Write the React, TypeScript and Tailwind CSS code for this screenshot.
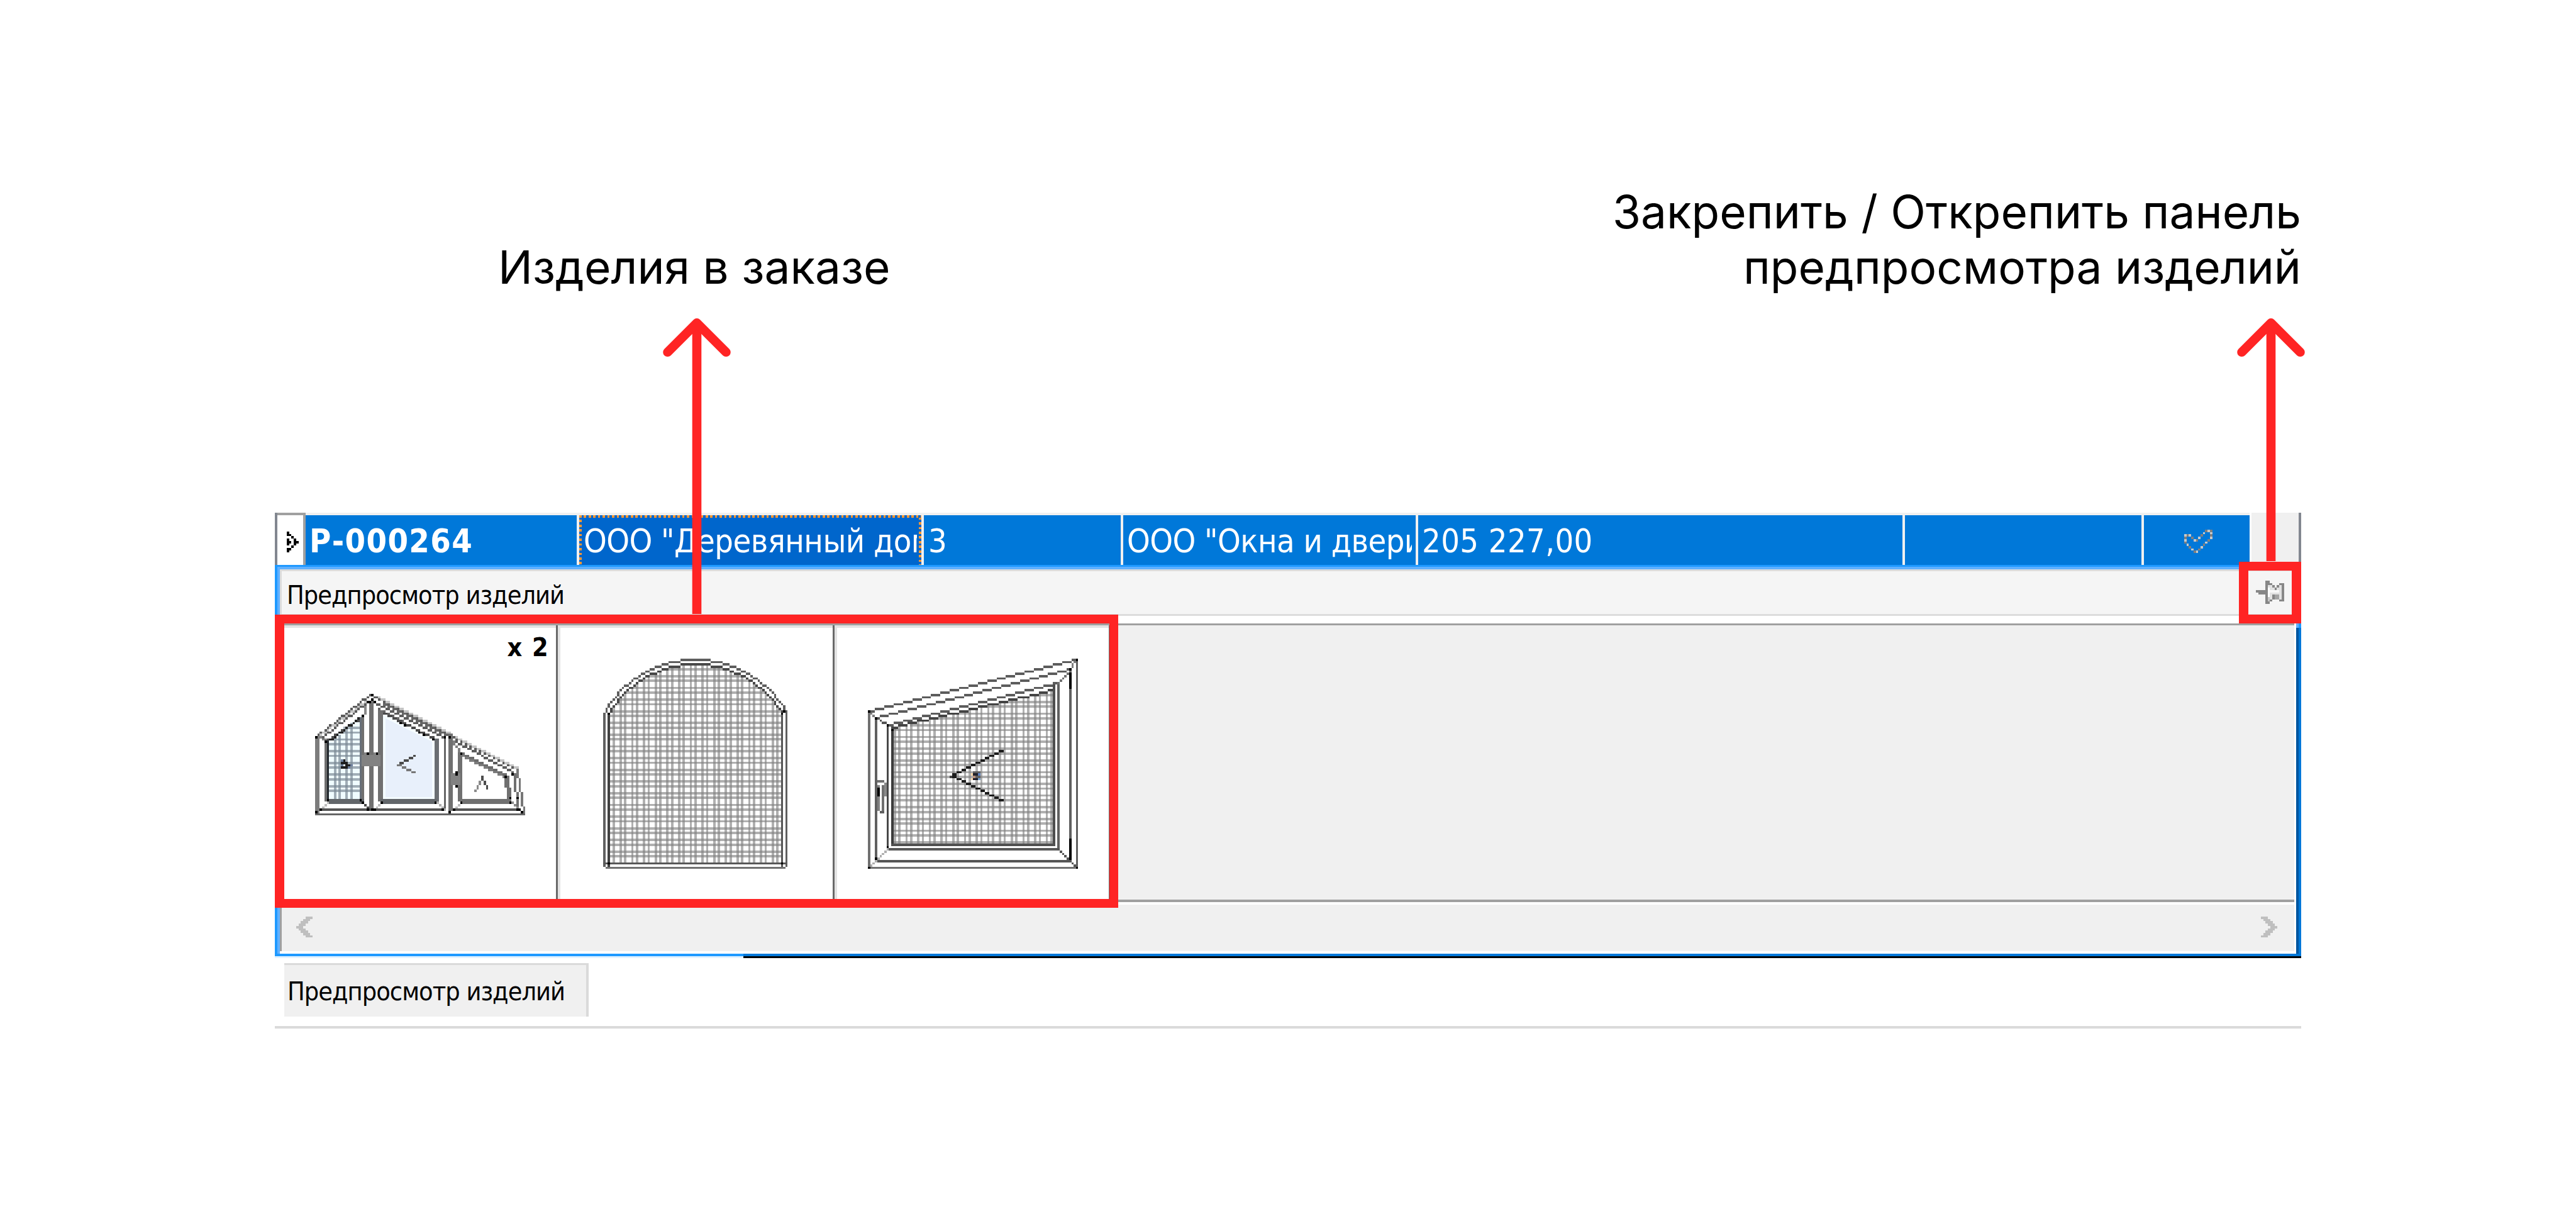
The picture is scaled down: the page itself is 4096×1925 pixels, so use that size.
import React from "react";

type Pt = [number, number];

/** Path data made of unit squares along a stepped line. */
function stepLine(points: Pt[]): string {
  let d = "";
  for (let i = 0; i < points.length - 1; i++) {
    let [x, y] = points[i];
    const [x1, y1] = points[i + 1];
    const dx = Math.abs(x1 - x);
    const dy = -Math.abs(y1 - y);
    const sx = x < x1 ? 1 : -1;
    const sy = y < y1 ? 1 : -1;
    let err = dx + dy;
    for (;;) {
      d += `M${x} ${y}h1v1h-1z`;
      if (x === x1 && y === y1) break;
      const e2 = 2 * err;
      if (e2 >= dy) {
        err += dy;
        x += sx;
      }
      if (e2 <= dx) {
        err += dx;
        y += sy;
      }
    }
  }
  return d;
}

function dots(points: Pt[]): string {
  return points.map(([x, y]) => `M${x} ${y}h1v1h-1z`).join("");
}

function arc(cx: number, cy: number, r: number, x0: number, x1: number): string {
  const pts: Pt[] = [];
  for (let x = x0; x <= x1; x++) {
    pts.push([x, Math.round(cy - Math.sqrt(r * r - (x - cx) * (x - cx)))]);
  }
  return stepLine(pts);
}

function range(from: number, to: number, mods: number[]): number[] {
  const out: number[] = [];
  for (let i = from; i <= to; i++) if (mods.includes(i % 5)) out.push(i);
  return out;
}

const Line = ({ p, c = "#5c5c5c" }: { p: Pt[]; c?: string }) => <path d={stepLine(p)} fill={c} />;
const Box = ({ x, y, w, h, c = "#707070" }: { x: number; y: number; w: number; h: number; c?: string }) => (
  <rect x={x} y={y} width={w} height={h} fill={c} />
);

function TripleWindow() {
  return (
    <svg viewBox="0 0 90 52" className="h-[193.4px] w-[334.8px]" shapeRendering="crispEdges">
      <polygon points="5,20 20,9 20,46 5,46" fill="#f0fcff" />
      <g fill="#7b8794" fillOpacity="0.68">
        {[8, 10, 13, 15].map((x) => (
          <rect key={x} x={x} y={27.5 - x} width="1" height={18 + x} />
        ))}
        {[14, 16, 19, 21, 24, 26, 29, 31, 34, 36, 39, 41].map((y) => {
          const x = Math.max(6, 26 - y);
          return <rect key={y} x={x} y={y} width={19 - x} height="1" />;
        })}
      </g>
      <polygon points="29,8 51,20 51,45 29,45" fill="#f4fcff" />
      <polygon points="30,10.5 50,20.5 50,44 30,44" fill="#e8f0fb" />

      <Line p={[[0, 18], [23, 0]]} />
      <Line p={[[3, 18], [22, 3]]} />
      <path d={stepLine([[2, 17], [21, 3]])} fill="#c4c4c4" />
      <Line p={[[4, 20], [19, 10]]} c="#4d4d4d" />
      <Line p={[[5, 20], [20, 9]]} c="#222222" />
      <Line p={[[24, 0], [57, 17]]} />
      <path d={stepLine([[27, 1], [58, 17]])} fill="#c4c4c4" />
      <Line p={[[25, 3], [54, 18]]} />
      <Line p={[[29, 4], [56, 17]]} c="#666666" />
      <Line p={[[27, 6], [51, 19]]} c="#666666" />
      <Line p={[[29, 8], [50, 18]]} c="#4a4a4a" />
      <Line p={[[57, 17], [86, 32]]} />
      <path d={stepLine([[60, 18], [86, 31]])} fill="#c4c4c4" />
      <Line p={[[60, 20], [84, 33]]} />
      <Line p={[[61, 24], [81, 34]]} c="#6b6b6b" />
      <Line p={[[62, 26], [81, 35]]} c="#7c7c7c" />
      <Line p={[[58, 19], [62, 25]]} c="#808080" />

      <Box x={0} y={18} w={2} h={33} c="#7c7c7c" />
      <Box x={4} y={20} w={1} h={26} c="#6e6e6e" />
      <Box x={5} y={20} w={1} h={26} c="#23282d" />
      <Box x={19} y={10} w={1} h={36} c="#68707a" />
      <Box x={20} y={9} w={1} h={37} />
      <Box x={23} y={3} w={2} h={46} />
      <Box x={27} y={7} w={2} h={39} />
      <Box x={51} y={19} w={2} h={27} c="#6a6e72" />
      <Box x={55} y={18} w={1} h={31} c="#666666" />
      <Box x={57} y={17} w={2} h={33} />
      <Box x={61} y={25} w={2} h={21} />
      <Box x={5} y={45} w={16} h={2} c="#62666a" />
      <Box x={28} y={45} w={24} h={2} c="#62666a" />
      <Box x={62} y={45} w={22} h={2} />
      <Box x={2} y={49} w={53} h={1} c="#555555" />
      <Box x={59} y={49} w={28} h={1} c="#555555" />
      <Box x={0} y={51} w={90} h={1} c="#666666" />

      <Line p={[[86, 32], [86, 35], [87, 36], [87, 41], [88, 42], [88, 47], [89, 48], [89, 50]]} c="#777777" />
      <Line p={[[85, 34], [85, 41], [86, 42], [86, 48]]} c="#707070" />
      <Box x={81} y={35} w={2} h={5} />
      <Box x={82} y={40} w={2} h={5} />
      <Line p={[[21, 5], [21, 8]]} c="#8a8a8a" />
      <Line p={[[1, 18], [4, 19]]} c="#808080" />
      <Line p={[[2, 49], [5, 46]]} c="#bdbdbd" />
      <Line p={[[20, 46], [23, 49]]} c="#4a4a4a" />
      <Line p={[[25, 49], [28, 46]]} c="#bdbdbd" />
      <Line p={[[52, 46], [55, 49]]} c="#b0b0b0" />
      <Line p={[[59, 49], [62, 46]]} c="#bdbdbd" />
      <Line p={[[84, 46], [87, 49]]} c="#8a8a8a" />

      <Box x={20} y={26} w={8} h={5} c="#828282" />
      <Box x={21} y={25} w={2} h={1} c="#828282" />
      <Box x={25} y={25} w={2} h={1} c="#828282" />
      <Box x={58} y={34} w={4} h={5} c="#828282" />
      <path
        fill="#000"
        d={dots([
          [0, 18], [24, 0], [24, 2], [22, 3], [23, 3], [25, 3], [22, 25], [26, 25], [60, 33], [60, 34], [60, 39],
          [4, 20], [20, 9], [20, 46], [5, 45], [19, 45], [28, 46], [51, 46], [2, 49], [24, 49], [22, 49], [25, 49],
          [54, 49], [55, 18], [57, 18], [59, 49], [57, 50], [0, 50], [62, 46], [62, 25], [83, 46], [83, 44],
          [86, 44], [86, 49], [87, 49], [88, 50], [84, 34], [81, 35], [36, 12], [38, 13], [44, 16], [46, 17], [50, 19],
        ])}
      />
      <Line p={[[42, 26], [36, 29]]} c="#4a4a4a" />
      <Line p={[[35, 30], [36, 30]]} c="#777777" />
      <Line p={[[37, 31], [42, 33]]} c="#777777" />
      <Line p={[[68, 41], [71, 35]]} c="#8a8a8a" />
      <Line p={[[71, 35], [73, 40]]} c="#4d4d4d" />
      <path fill="#1e1e1e" d={dots([[12, 28], [11, 29], [12, 29], [13, 29], [13, 30], [14, 30], [12, 31], [13, 31], [11, 31]])} />
      <path fill="#6d7f9c" d={dots([[11, 28], [14, 31], [15, 30], [11, 30]])} />
    </svg>
  );
}

function ArchedWindow() {
  const top = (v: number) => 45 - Math.sqrt(Math.max(0, 43 * 43 - (v - 39) * (v - 39))) + 0.5;
  return (
    <svg viewBox="0 0 79 90" className="h-[334.8px] w-[293.9px]" shapeRendering="crispEdges">
      <g fill="#808080" fillOpacity="0.62">
        {range(3, 75, [2, 4]).map((x) => {
          const y = Math.round(top(x));
          return <rect key={x} x={x} y={y} width="1" height={87 - y} />;
        })}
        {range(3, 86, [2, 4]).map((y) => {
          const half = y < 23 ? Math.sqrt(43 * 43 - (45 - y) * (45 - y)) : 37;
          const x = Math.max(3, Math.round(39 - half));
          return <rect key={y} x={x} y={y} width={79 - 2 * x} height="1" />;
        })}
      </g>
      <path d={arc(39, 45, 45, 0, 78)} fill="#5e5e5e" />
      <path d={arc(39, 45, 43, 2, 76)} fill="#484848" />
      <Box x={0} y={23} w={1} h={66} c="#606060" />
      <Box x={2} y={23} w={1} h={66} c="#404040" />
      <Box x={76} y={23} w={1} h={66} c="#555555" />
      <Box x={78} y={23} w={1} h={66} c="#606060" />
      <Box x={0} y={87} w={79} h={1} c="#585858" />
      <Box x={1} y={89} w={77} h={1} c="#707070" />
      <path fill="#000" d={dots([[2, 23], [76, 23], [77, 22], [2, 87], [76, 87]])} />
    </svg>
  );
}

function SlantedWindow() {
  const topAt = (x: number) => Math.round(30 - ((x - 10) * 17) / 69);
  return (
    <svg viewBox="0 0 90 90" className="h-[334.8px] w-[334.8px]" shapeRendering="crispEdges">
      <g fill="#808080" fillOpacity="0.62">
        {range(11, 78, [1, 3]).map((x) => (
          <rect key={x} x={x} y={topAt(x)} width="1" height={79 - topAt(x)} />
        ))}
        {range(13, 78, [0, 3]).map((y) => {
          const x = y < 30 ? Math.round(10 + ((30 - y) * 69) / 17) : 11;
          return <rect key={y} x={x} y={y} width={Math.max(0, 79 - x)} height="1" />;
        })}
      </g>
      <Line p={[[0, 22], [89, 0]]} />
      <Line p={[[3, 25], [86, 4]]} />
      <Line p={[[8, 28], [81, 10]]} />
      <Line p={[[10, 29], [79, 13]]} c="#444444" />
      <Box x={0} y={22} w={1} h={68} c="#707070" />
      <Box x={89} y={0} w={1} h={90} c="#606060" />
      <Box x={0} y={89} w={90} h={1} c="#707070" />
      <Box x={3} y={25} w={1} h={62} c="#606060" />
      <Box x={86} y={4} w={1} h={83} c="#606060" />
      <Box x={86} y={4} w={1} h={9} c="#000" />
      <Box x={86} y={77} w={1} h={9} c="#000" />
      <Box x={3} y={86} w={84} h={1} c="#555555" />
      <Box x={8} y={28} w={1} h={53} c="#484848" />
      <Box x={81} y={10} w={1} h={71} c="#606060" />
      <Box x={8} y={81} w={74} h={1} c="#585858" />
      <Box x={10} y={30} w={1} h={50} c="#3c3c3c" />
      <Box x={79} y={11} w={1} h={69} c="#4e4e4e" />
      <Box x={10} y={79} w={70} h={1} c="#505050" />
      <Line p={[[0, 22], [3, 25]]} c="#808080" />
      <Line p={[[4, 25], [8, 28]]} c="#555555" />
      <Line p={[[88, 1], [86, 4]]} c="#808080" />
      <Line p={[[86, 5], [81, 10]]} c="#707070" />
      <Line p={[[0, 89], [3, 86]]} c="#b0b0b0" />
      <Line p={[[4, 85], [8, 81]]} c="#b0b0b0" />
      <Line p={[[88, 88], [86, 86]]} c="#555555" />
      <Line p={[[85, 85], [81, 81]]} c="#555555" />
      <path
        fill="#000"
        d={dots([[0, 22], [3, 25], [8, 28], [10, 30], [89, 0], [86, 4], [0, 89], [89, 89], [3, 85], [8, 80]])}
      />
      <Box x={4} y={52} w={3} h={1} c="#707070" />
      <Box x={6} y={54} w={1} h={12} c="#707070" />
      <Box x={7} y={53} w={1} h={6} c="#8a8a8a" />
      <Box x={4} y={54} w={1} h={1} c="#808080" />
      <Box x={4} y={55} w={1} h={4} c="#000" />
      <Box x={4} y={59} w={1} h={6} c="#808080" />
      <Box x={5} y={65} w={2} h={1} c="#606060" />
      <Line p={[[57, 39], [36, 49]]} c="#1c1c1c" />
      <Line p={[[36, 50], [57, 60]]} c="#1c1c1c" />
      <Box x={35} y={50} w={1} h={1} c="#444444" />
      <Box x={45} y={48} w={3} h={4} c="#5f5f5f" />
      <Box x={45} y={49} w={2} h={1} c="#22222a" />
      <Box x={45} y={51} w={2} h={1} c="#1a1a2a" />
      <Box x={44} y={49} w={1} h={1} c="#ffdcae" />
      <Box x={44} y={51} w={1} h={1} c="#ffdcae" />
      <Box x={47} y={49} w={1} h={1} c="#5b7fc0" />
      <Box x={47} y={51} w={1} h={1} c="#7aa6d0" />
      <Box x={45} y={50} w={1} h={1} c="#b7907c" />
    </svg>
  );
}

const checkOutline: Pt[] = [
  [0, 5], [0, 4], [0, 3], [0, 2], [1, 2], [2, 2], [3, 3], [4, 4], [5, 4], [6, 3], [7, 2], [8, 1], [9, 0], [10, 0],
  [11, 0], [11, 1], [11, 2], [11, 3], [10, 4], [9, 5], [8, 6], [7, 7], [6, 8], [5, 9], [4, 9], [3, 8], [2, 7], [1, 6],
];

function CheckIcon() {
  return (
    <svg viewBox="0 0 12 10" className="h-[37.2px] w-[44.6px]" shapeRendering="crispEdges">
      <path d={dots(checkOutline.filter((_, i) => i % 2 === 0))} fill="#808080" />
      <path d={dots(checkOutline.filter((_, i) => i % 2 === 1))} fill="#c8c8c8" />
    </svg>
  );
}

function PinIcon() {
  return (
    <svg viewBox="0 0 12 10" className="h-[37.2px] w-[44.6px]" shapeRendering="crispEdges">
      <Box x={5} y={2} w={6} h={6} c="#e2e2e2" />
      <Box x={5} y={3} w={1} h={4} c="#ffffff" />
      <Box x={6} y={4} w={4} h={1} c="#f8f8f8" />
      <Box x={7} y={1} w={3} h={1} c="#f5f5f5" />
      <Box x={8} y={2} w={1} h={1} c="#f5f5f5" />
      <Box x={7} y={6} w={3} h={2} c="#a4a4a4" />
      <Box x={7} y={6} w={1} h={2} c="#858585" />
      <Box x={5} y={7} w={1} h={2} c="#c8c8c8" />
      <Box x={7} y={8} w={3} h={1} c="#f5f5f5" />
      <path
        fill="#878787"
        d={
          "M4 0h1v10h-1zM11 1h1v8h-1zM0 4h4v1h-4zM1 5h3v1h-3z" +
          dots([[5, 0], [5, 1], [5, 9], [10, 1], [10, 8], [6, 1], [7, 2], [8, 3], [9, 2], [6, 8]])
        }
      />
    </svg>
  );
}

function RowMarker() {
  return (
    <svg viewBox="0 0 5 9" className="h-[33.5px] w-[18.6px]" shapeRendering="crispEdges">
      <path
        d={dots([
          [0, 0], [0, 1], [1, 1], [2, 2], [0, 3], [3, 3], [0, 4], [1, 4], [3, 4], [4, 4], [0, 5], [3, 5], [2, 6],
          [0, 7], [1, 7], [0, 8],
        ])}
      />
    </svg>
  );
}

function ScrollChevron({ flip = false }: { flip?: boolean }) {
  return (
    <svg viewBox="0 0 7 9" className={flip ? "h-[33.5px] w-[26px] -scale-x-100" : "h-[33.5px] w-[26px]"} shapeRendering="crispEdges">
      {[4, 3, 2, 1, 0, 1, 2, 3, 4].map((x, y) => (
        <rect key={y} x={x} y={y} width="3" height="1" fill="#bfbfbf" />
      ))}
    </svg>
  );
}

function Arrow({ length, className }: { length: number; className: string }) {
  return (
    <svg width="108" height={length + 7.3} className={className} fill="none" stroke="#ff2424" strokeWidth="14.6">
      <path d={`M54 7.3V${length + 7.3}`} />
      <path d="M7.5 53.8L54 7.3L100.5 53.8" strokeLinecap="round" strokeLinejoin="round" />
    </svg>
  );
}

const cell = "h-full shrink-0 overflow-hidden whitespace-nowrap bg-[#0078d9] pt-[3px] text-[52px] leading-[76px] text-white";
const gap = "h-full shrink-0 bg-[#f0f0f0]";

function OrderRow() {
  return (
    <div className="flex h-[83px] w-[3222px]">
      <div className="flex h-full w-[49px] shrink-0 bg-[#a0a0a0]">
        <div className="h-full w-1 bg-[#828790]" />
        <div className="mt-1 h-[79px] w-[41px] bg-white pl-[15px] pt-[26px]">
          <RowMarker />
        </div>
      </div>
      <div className="flex h-full w-[3091px] shrink-0 bg-[#f0f0f0] pt-1">
        <div className={`${cell} w-[431px] pl-[6px] font-bold tracking-[1.4px]`}>Р-000264</div>
        <div className={`${gap} w-1`} />
        <div className="relative h-full w-[544px] shrink-0 overflow-hidden bg-[#0066cc]">
          <div className="h-full w-[537px] overflow-hidden whitespace-nowrap pl-[7px] pt-[3px] text-[52px] leading-[76px] tracking-[-0.55px] text-white">
            ООО "Деревянный дом"
          </div>
          <div className="absolute inset-x-0 top-0 h-1 bg-[repeating-linear-gradient(90deg,#ff9933_0_3.72px,transparent_3.72px_7.44px)]" />
          <div className="absolute inset-y-0 left-0 w-1 bg-[repeating-linear-gradient(180deg,#ff9933_0_3.72px,transparent_3.72px_7.44px)]" />
          <div className="absolute inset-y-0 right-0 w-1 bg-[repeating-linear-gradient(180deg,transparent_0_3.72px,#ff9933_3.72px_7.44px)]" />
        </div>
        <div className={`${gap} w-1`} />
        <div className={`${cell} w-[313px] pl-[7px]`}>3</div>
        <div className={`${gap} w-1`} />
        <div className={`${cell} w-[465px]`}>
          <div className="w-[459px] overflow-hidden pl-[6px] tracking-[-0.55px]">ООО "Окна и двери"</div>
        </div>
        <div className={`${gap} w-1`} />
        <div className={`${cell} w-[770px] pl-[6px] tracking-[0.4px]`}>205 227,00</div>
        <div className={`${gap} w-1`} />
        <div className={`${cell} w-[376px]`} />
        <div className={`${gap} w-1`} />
        <div className="h-full w-[168px] shrink-0 bg-[#0078d9] pl-[64px] pt-[23px]">
          <CheckIcon />
        </div>
      </div>
      <div className="h-full w-[3px] bg-white" />
      <div className="h-full w-[75px] bg-[#f0f0f0]" />
      <div className="h-full w-1 bg-[#828790]" />
    </div>
  );
}

function PreviewPanel() {
  return (
    <div className="w-[3222px]">
      <div className="h-[3px] bg-[#1e99ff]" />
      <div className="flex h-1">
        <div className="w-1 bg-[#1e99ff]" />
        <div className="flex-1 bg-[#60b0ff]" />
      </div>
      {/* caption bar */}
      <div className="flex h-[86px]">
        <div className="w-1 bg-[#1e99ff]" />
        <div className="w-1 bg-[#60b0ff]" />
        <div className="flex flex-1 flex-col bg-white">
          <div className="flex h-[74px] flex-col border-y-[3px] border-l-[3px] border-[#dcdcdc] bg-[#f5f5f5]">
            <div className="flex justify-between pl-[8px] pr-[19px]">
              <span className="pt-[5px] text-[41px] leading-[67px] tracking-[-0.95px] text-black">Предпросмотр изделий</span>
              <span className="pt-[15px]">
                <PinIcon />
              </span>
            </div>
          </div>
        </div>
        <div className="w-1 bg-[#60b0ff]" />
        <div className="w-1 bg-[#1e99ff]" />
      </div>
      {/* item list with scroll bar */}
      <div className="flex h-[525px]">
        <div className="w-1 bg-[#1e99ff]" />
        <div className="w-1 bg-[#60b0ff]" />
        <div className="flex flex-1 flex-col">
          <div className="flex h-[521px]">
            <div className="w-[3px] bg-[#a0a0a0]" />
            <div className="flex w-[3200px] flex-col bg-[#f0f0f0]">
              <div className="h-[3px] bg-[#a0a0a0]" />
              <div className="flex h-[436px]">
                <div className="h-full w-[436px] border-t-4 border-[#e3e3e3] bg-white">
                  <div className="flex h-0 justify-end pr-[11px]">
                    <span className="pt-[5px] text-[41px] font-bold leading-[52px] tracking-[1.4px] text-black">x 2</span>
                  </div>
                  <div className="pl-[52.5px] pt-[104.5px]">
                    <TripleWindow />
                  </div>
                </div>
                <div className="h-full w-[3px] bg-[#696969]" />
                <div className="h-full w-[437px] border-l-4 border-t-4 border-[#e3e3e3] bg-white pl-[67.5px] pt-[48.5px]">
                  <ArchedWindow />
                </div>
                <div className="h-full w-[3px] bg-[#696969]" />
                <div className="h-full w-[436px] border-l-4 border-t-4 border-[#e3e3e3] bg-white pl-[48.5px] pt-[48.5px]">
                  <SlantedWindow />
                </div>
                <div className="h-full w-[3px] bg-[#696969]" />
              </div>
              <div className="h-1 bg-[#a0a0a0]" />
              <div className="h-1 bg-white" />
              <div className="flex justify-between pl-[22.5px] pr-[27px] pt-[18.5px]">
                <ScrollChevron />
                <ScrollChevron flip />
              </div>
            </div>
            <div className="w-[3px] bg-white" />
          </div>
          <div className="h-1 bg-white" />
        </div>
        <div className="flex w-2 flex-col">
          <div className="flex h-[7px]">
            <div className="w-1 bg-[#60b0ff]" />
            <div className="w-1 bg-[#1e99ff]" />
          </div>
          <div className="flex flex-1">
            <div className="w-1 bg-[#0055a0]" />
            <div className="w-1 bg-[#0078d9]" />
          </div>
        </div>
      </div>
      <div className="flex h-1">
        <div className="w-[745px] bg-[#1e99ff]" />
        <div className="flex-1 bg-[#0078d9]" />
      </div>
      <div className="flex h-[3px]">
        <div className="w-[745px] bg-[#e2f2ff]" />
        <div className="flex-1 bg-black" />
      </div>
    </div>
  );
}

export default function App() {
  return (
    <div className="relative h-[1925px] w-[4096px] overflow-hidden bg-white font-['DejaVu_Sans_Condensed','DejaVu_Sans',sans-serif] [font-stretch:condensed]">
      <div className="flex h-[815px] items-start justify-between pl-[792px] pr-[437px] pt-[293px] font-['Inter',sans-serif] text-[72.9px] leading-[88px] tracking-[0.06px] text-black">
        <p className="pt-[88px]">Изделия в заказе</p>
        <p className="text-right">
          Закрепить / Открепить панель
          <br />
          предпросмотра изделий
        </p>
      </div>

      <main className="ml-[437px] w-[3222px]">
        <OrderRow />
        <PreviewPanel />
        <div className="ml-[15px] mt-2 h-[85px] w-[484px] border-r-4 border-t-[3px] border-[#dadada] bg-[#f0f0f0] pl-[5px] pt-px text-[41px] leading-[82px] tracking-[-0.95px] text-black">
          Предпросмотр изделий
        </div>
        <div className="mt-[15px] h-1 bg-[#dadada]" />
      </main>

      {/* callouts over the panel */}
      <div className="absolute left-[437px] top-[977px] h-[466px] w-[1341px] border-[14px] border-l-[15px] border-[#ff2424]" />
      <div className="absolute left-[3560px] top-[893px] h-[98px] w-[99px] border-x-[15px] border-y-[14px] border-[#ff2424]" />
      <Arrow length={463} className="absolute left-[1053.8px] top-[505.5px]" />
      <Arrow length={379} className="absolute left-[3557.3px] top-[505.5px]" />
    </div>
  );
}
